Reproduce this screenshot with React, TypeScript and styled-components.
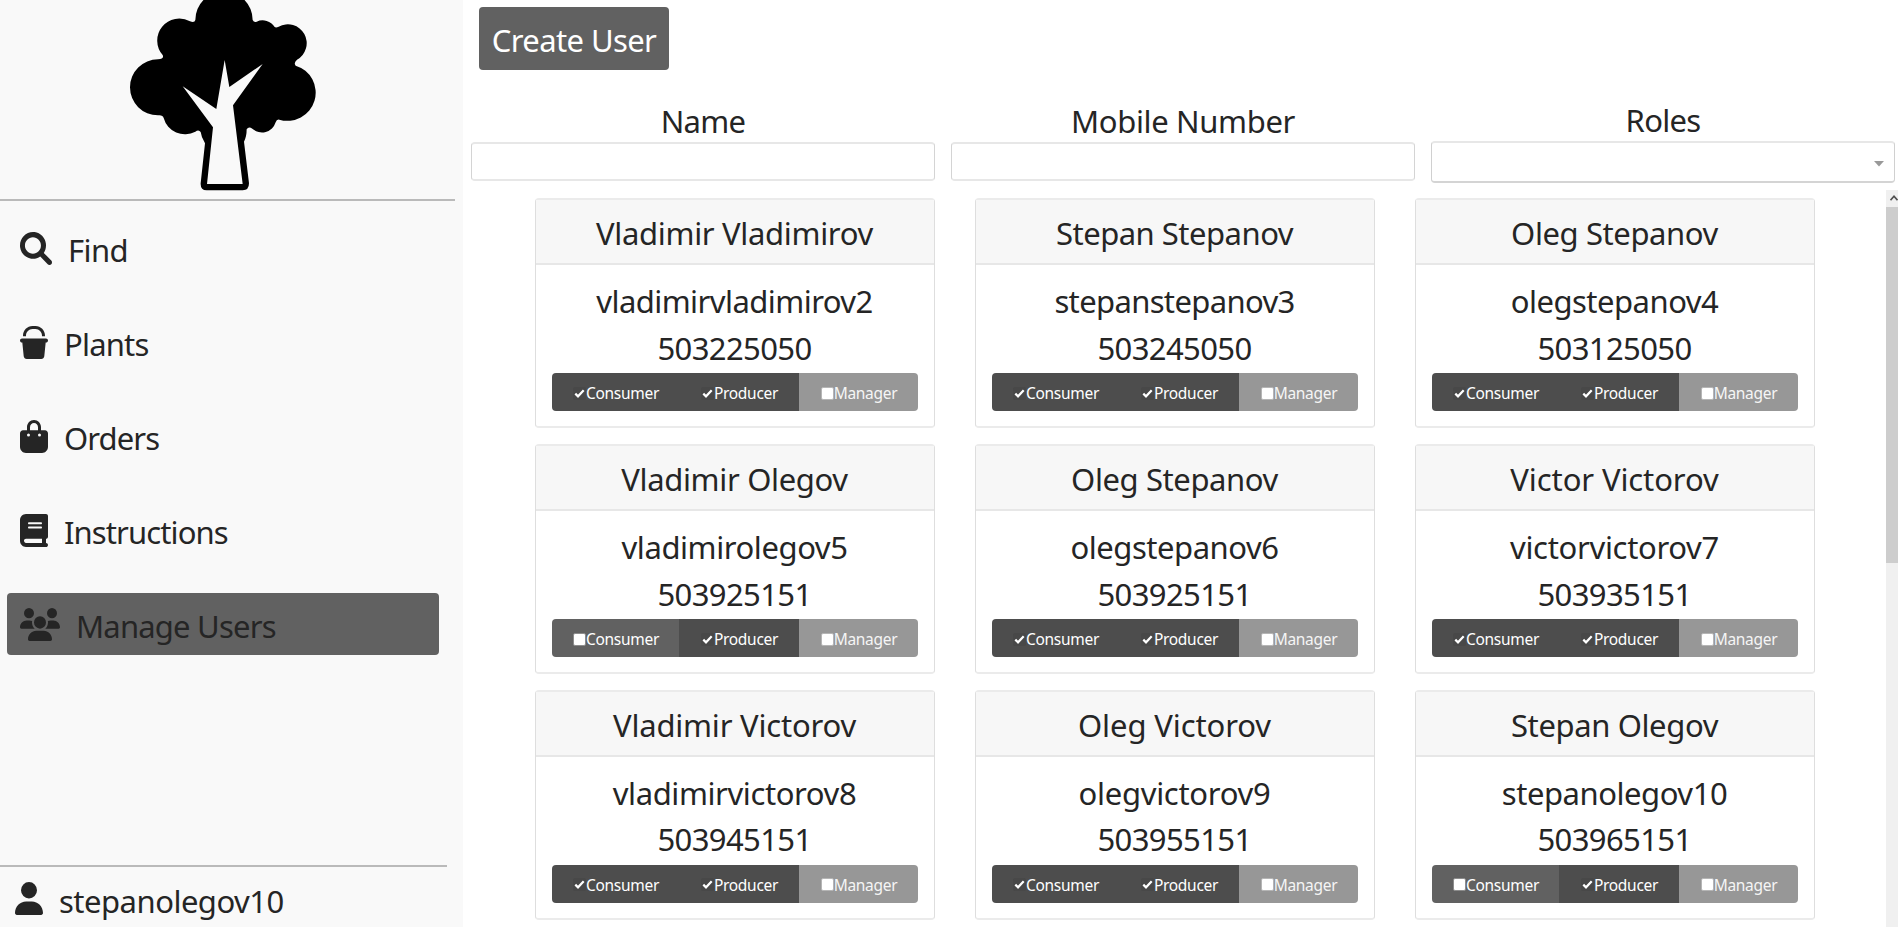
import React from 'react';
import styled, { createGlobalStyle } from 'styled-components';
import { FaBucket, FaBagShopping, FaBook, FaUsers, FaUser } from 'react-icons/fa6';

const GlobalStyle = createGlobalStyle`
  *, *::before, *::after { box-sizing: border-box; }
  body {
    margin: 0;
    overflow: hidden;
    background: #fff;
    color: #252525;
    font-family: 'Noto Sans', 'Open Sans', sans-serif;
    font-size: 31px;
    line-height: 46.5px;
    letter-spacing: -0.35px;
  }
`;

const Page = styled.div`
  display: flex;
  width: 1898px;
  height: 927px;
  overflow: hidden;
`;

const Sidebar = styled.aside`
  display: flex;
  flex-direction: column;
  flex: none;
  width: 463px;
  background: #f9f9f9;
`;

const Logo = styled.svg`
  display: block;
  flex: none;
  width: 260px;
  height: 199px;
  margin-left: 100px;
`;

const Divider = styled.hr<{ $width: number }>`
  flex: none;
  width: ${(p) => p.$width}px;
  height: 2px;
  margin: 0;
  border: 0;
  background: #bababa;
`;

const Nav = styled.nav`
  display: flex;
  flex-direction: column;
  flex: 1;
  gap: 32px;
  padding: 15.5px 24px 0 7px;
`;

const NavItem = styled.a<{ $active?: boolean }>`
  display: flex;
  align-items: flex-start;
  gap: 16px;
  height: 62px;
  padding: 15px 13px 0;
  border-radius: 4px;
  white-space: nowrap;
  background: ${(p) => (p.$active ? '#616161' : 'transparent')};
`;

const IconBox = styled.span<{ $width: number }>`
  display: flex;
  flex: none;
  width: ${(p) => p.$width}px;
  height: 33px;
  svg { width: 100%; height: 100%; }
`;

const NavLabel = styled.span<{ $spacing: number }>`
  margin-top: -4.5px;
  letter-spacing: ${(p) => p.$spacing}px;
`;

const Account = styled.div`
  display: flex;
  align-items: flex-start;
  gap: 16px;
  height: 60px;
  padding: 15px 15px 0;
`;

const Main = styled.main`
  display: flex;
  flex-direction: column;
  flex: 1;
  min-width: 0;
`;

const Toolbar = styled.div`
  height: 98px;
  padding: 7px 0 0 16px;
`;

const CreateButton = styled.button`
  width: 190px;
  height: 63px;
  padding: 4px 0 0;
  border: 0;
  border-radius: 4px;
  background: #616161;
  color: #fff;
  font: inherit;
  letter-spacing: -0.6px;
`;

const Filters = styled.div`
  display: grid;
  grid-template-columns: repeat(3, 464px);
  gap: 16px;
  height: 92px;
  padding-left: 8px;
`;

const Filter = styled.label<{ $raised?: boolean }>`
  display: flex;
  flex-direction: column;
  text-align: center;
  margin-top: ${(p) => (p.$raised ? -1 : 0)}px;
`;

const FilterName = styled.span<{ $spacing: number }>`
  height: 44px;
  letter-spacing: ${(p) => p.$spacing}px;
`;

const TextInput = styled.input`
  width: 100%;
  height: 39px;
  border: 1px solid #d4d4d4;
  border-top: 2px solid #e7e7e7;
  border-bottom: 2px solid #e7e7e7;
  border-radius: 4px;
  background: #fff;
`;

const SelectBox = styled.div`
  display: flex;
  align-items: center;
  justify-content: flex-end;
  height: 42px;
  padding: 3px 10px 0 0;
  border: 1px solid #d0d0d0;
  border-top: 2px solid #e7e7e7;
  border-bottom: 2px solid #d4d4d4;
  border-radius: 4px;
`;

const ListArea = styled.div`
  display: flex;
  justify-content: space-between;
  height: 737px;
  overflow: hidden;
`;

const CardGrid = styled.div`
  display: grid;
  grid-template-columns: repeat(3, 400px);
  grid-auto-rows: 230px;
  gap: 15.8px 40px;
  padding: 8.4px 0 0 72px;
`;

const Card = styled.article`
  display: flex;
  flex-direction: column;
  border: 1px solid #dedede;
  border-top: 2px solid #ebebeb;
  border-bottom: 2px solid #ebebeb;
  border-radius: 4px;
  text-align: center;
  white-space: nowrap;
`;

const CardHeader = styled.header<{ $spacing: number }>`
  height: 65px;
  padding: 10px 1px 0 0;
  border-bottom: 2px solid #e7e7e7;
  background: #f7f7f7;
  letter-spacing: ${(p) => p.$spacing}px;
`;

const CardBody = styled.div`
  display: flex;
  flex-direction: column;
  padding: 13px 16px 0;
`;

const CardLine = styled.div<{ $spacing: number }>`
  padding-right: 1px;
  letter-spacing: ${(p) => p.$spacing}px;
`;

const RoleGroup = styled.div`
  display: grid;
  grid-template-columns: 127px 120px 119px;
  height: 38px;
  margin-top: 2px;
  border-radius: 4px;
  overflow: hidden;
`;

type RoleState = 'on' | 'off' | 'disabled';

const roleColors: Record<RoleState, string> = { on: '#4d4d4d', off: '#616161', disabled: '#979797' };

const RoleButton = styled.label<{ $state: RoleState }>`
  display: flex;
  align-items: center;
  justify-content: center;
  padding: 2px 0 0 1px;
  background: ${(p) => roleColors[p.$state]};
  color: ${(p) => (p.$state === 'disabled' ? '#f5f5f5' : '#fff')};
  font-size: 15.5px;
  line-height: 36px;
  letter-spacing: -0.3px;
`;

const CheckMark = styled.span<{ $state: RoleState }>`
  display: flex;
  align-items: center;
  justify-content: center;
  flex: none;
  width: 13px;
  height: 13px;
  border-radius: 2px;
  border: 1px solid ${(p) => (p.$state === 'on' ? '#484848' : p.$state === 'off' ? '#8c8c8c' : '#b5b5b5')};
  background: ${(p) => (p.$state === 'on' ? '#484848' : '#fff')};
`;

const Scrollbar = styled.div`
  flex: none;
  width: 12px;
  background: #f0f0f0;
`;

const ScrollArrow = styled.div`
  display: flex;
  height: 17px;
  padding: 4px 0 0 4px;
  overflow: hidden;
`;

const ScrollThumb = styled.div`
  height: 356px;
  background: #cdcdcd;
`;

const TreeLogo = () => (
  <Logo viewBox="0 0 780 597">
    <path d="M286 60 A86 86 0 0 1 458 60 Q462 68 470 65 A43 43 0 0 1 524 81 Q528 84 536 80 A56 56 0 0 1 591 179 Q580 189 587 197 A84 84 0 0 1 538 359 Q530 357 527 367 A43 43 0 0 1 457 386 Q446 378 440 388 Q440 410 432 425 L447 550 Q447 571 428 571 H320 Q301 571 302 550 L315 430 Q304 412 302 396 Q296 387 286 395 A66 66 0 0 1 191 354 Q188 344 174 346 A84 84 0 0 1 174 178 Q193 177 188 165 A66 66 0 0 1 270 64 Q284 69 286 60Z" />
    <path fill="#f9f9f9" d="M321 552 339 382 248 259 349 327 374 180 388 261 488 192 399 316 428 552Z" />
  </Logo>
);

const SearchIcon = (props: React.SVGProps<SVGSVGElement>) => (
  <svg viewBox="0 0 512 512" fill="currentColor" {...props}>
    <path d="M500.3 443.7l-119.7-119.7c27.22-40.41 40.65-90.9 33.46-144.7C401.8 87.79 326.8 13.32 235.2 1.723C99.01-15.51-15.51 99.01 1.724 235.2c11.6 91.64 86.08 166.7 177.6 178.9c53.8 7.189 104.3-6.236 144.7-33.46l119.7 119.7c15.62 15.62 40.95 15.62 56.57 0C515.9 484.7 515.9 459.3 500.3 443.7zM79.1 208c0-70.58 57.42-128 128-128s128 57.42 128 128c0 70.58-57.42 128-128 128S79.1 278.6 79.1 208z" />
  </svg>
);

const navItems = [
  { label: 'Find', Icon: SearchIcon, width: 32, spacing: -0.6 },
  { label: 'Plants', Icon: FaBucket, width: 28, spacing: -0.8 },
  { label: 'Orders', Icon: FaBagShopping, width: 28, spacing: -0.9 },
  { label: 'Instructions', Icon: FaBook, width: 28, spacing: -0.9 },
  { label: 'Manage Users', Icon: FaUsers, width: 40, spacing: -0.8, active: true },
];

interface User {
  name: string;
  login: string;
  phone: string;
  consumer: boolean;
  nameSpacing: number;
  loginSpacing: number;
}

const user = (
  name: string,
  login: string,
  phone: string,
  nameSpacing: number,
  loginSpacing: number,
  consumer = true,
): User => ({ name, login, phone, consumer, nameSpacing, loginSpacing });

const users: User[] = [
  user('Vladimir Vladimirov', 'vladimirvladimirov2', '503225050', -0.32, -0.55),
  user('Stepan Stepanov', 'stepanstepanov3', '503245050', -0.5, -0.65),
  user('Oleg Stepanov', 'olegstepanov4', '503125050', -0.4, -0.5),
  user('Vladimir Olegov', 'vladimirolegov5', '503925151', -0.33, -0.42, false),
  user('Oleg Stepanov', 'olegstepanov6', '503925151', -0.4, -0.45),
  user('Victor Victorov', 'victorvictorov7', '503935151', -0.1, -0.32),
  user('Vladimir Victorov', 'vladimirvictorov8', '503945151', -0.2, -0.4),
  user('Oleg Victorov', 'olegvictorov9', '503955151', -0.1, -0.3),
  user('Stepan Olegov', 'stepanolegov10', '503965151', -0.38, -0.45, false),
];

const Role = ({ label, state }: { label: string; state: RoleState }) => (
  <RoleButton $state={state}>
    <CheckMark $state={state}>
      {state === 'on' && (
        <svg width="11" height="11" viewBox="0 0 11 11" fill="none" stroke="#fff" strokeWidth="2.2">
          <path d="M1.3 5.6 4 8.3 9.7 2.2" />
        </svg>
      )}
    </CheckMark>
    {label}
  </RoleButton>
);

const UserCard = ({ data }: { data: User }) => (
  <Card>
    <CardHeader $spacing={data.nameSpacing}>{data.name}</CardHeader>
    <CardBody>
      <CardLine $spacing={data.loginSpacing}>{data.login}</CardLine>
      <CardLine $spacing={-0.6}>{data.phone}</CardLine>
      <RoleGroup>
        <Role label="Consumer" state={data.consumer ? 'on' : 'off'} />
        <Role label="Producer" state="on" />
        <Role label="Manager" state="disabled" />
      </RoleGroup>
    </CardBody>
  </Card>
);

export default function App() {
  return (
    <>
      <GlobalStyle />
      <Page>
        <Sidebar>
          <TreeLogo />
          <Divider $width={455} />
          <Nav>
            {navItems.map(({ label, Icon, width, spacing, active }) => (
              <NavItem key={label} $active={active}>
                <IconBox $width={width}>
                  <Icon preserveAspectRatio="none" />
                </IconBox>
                <NavLabel $spacing={spacing}>{label}</NavLabel>
              </NavItem>
            ))}
          </Nav>
          <Divider $width={447} />
          <Account>
            <IconBox $width={28}>
              <FaUser preserveAspectRatio="none" />
            </IconBox>
            <NavLabel $spacing={-0.5}>stepanolegov10</NavLabel>
          </Account>
        </Sidebar>
        <Main>
          <Toolbar>
            <CreateButton>Create User</CreateButton>
          </Toolbar>
          <Filters>
            <Filter>
              <FilterName $spacing={-0.7}>Name</FilterName>
              <TextInput />
            </Filter>
            <Filter>
              <FilterName $spacing={-0.35}>Mobile Number</FilterName>
              <TextInput />
            </Filter>
            <Filter $raised>
              <FilterName $spacing={-0.7}>Roles</FilterName>
              <SelectBox>
                <svg width="10" height="6" viewBox="0 0 10 6" fill="#999">
                  <path d="M0 0h10L5 5.5z" />
                </svg>
              </SelectBox>
            </Filter>
          </Filters>
          <ListArea>
            <CardGrid>
              {users.map((u) => (
                <UserCard key={u.login} data={u} />
              ))}
            </CardGrid>
            <Scrollbar>
              <ScrollArrow>
                <svg width="9" height="8" viewBox="0 0 9 8" fill="none" stroke="#505050" strokeWidth="2">
                  <path d="M0.5 6.5 4.5 2 8.5 6.5" />
                </svg>
              </ScrollArrow>
              <ScrollThumb />
            </Scrollbar>
          </ListArea>
        </Main>
      </Page>
    </>
  );
}
